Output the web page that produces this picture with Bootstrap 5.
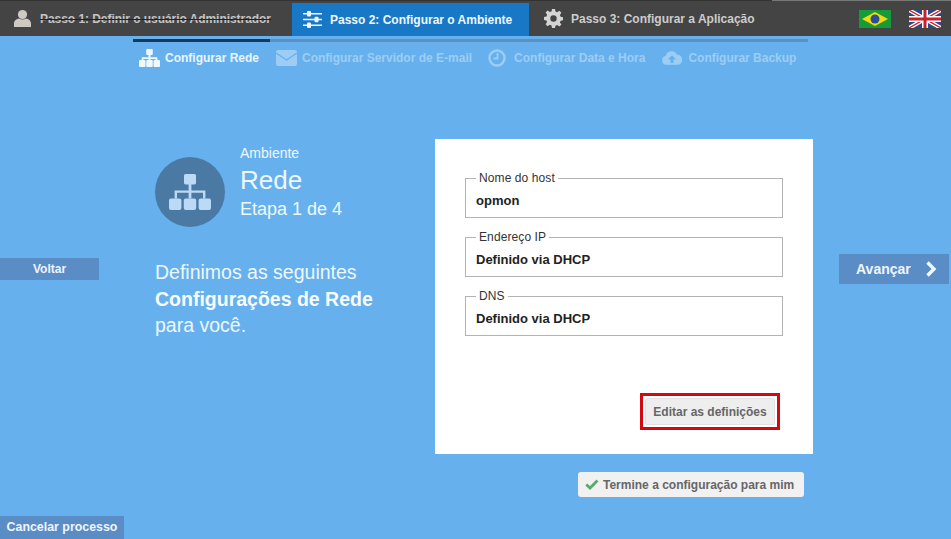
<!DOCTYPE html>
<html lang="pt-BR">
<head>
<meta charset="utf-8">
<title>Configurar Rede</title>
<link href="https://cdn.jsdelivr.net/npm/bootstrap@5.3.0/dist/css/bootstrap.min.css" rel="stylesheet">
<style>
html,body{height:539px;overflow:hidden}
body{background:#66b1ed;font-family:"Liberation Sans",Arial,sans-serif;color:#fff;width:951px}
.page-wrap{height:539px}
.top-rail{height:1px;background:#777}
.top-rail-fill{height:1px;width:772px;background:#333}
.topstrip{height:35px;background:#444}
.step-tab{height:35px;font-size:12px;font-weight:700}
.step-one{width:292px;padding-left:13px;color:#c4c4c4;letter-spacing:-.05px}
.step-one span{text-decoration:line-through;text-decoration-color:#222}
.step-two{width:237px;padding-left:11px;background:#1878c6;color:#eef7ff;margin-top:2px;height:33px}
.step-three{padding-left:15px;color:#ccc;width:330px}
.flag-box{gap:18px;padding-right:10px}
.sub-rail{height:3px;margin:3px 143px 0 133px;background:#5b90c0}
.rail-done{width:137px;background:#153a5c}
.sub-steps{height:32px;margin-left:139px;font-size:12px;font-weight:700;color:#9dcdf4;gap:16px}
.sub-item{gap:5px}
.sub-item.on{color:#e8f5ff}
.sub-mail{margin-left:1px}
.sub-clock{gap:8px}
.sub-cloud{margin-left:1px;gap:6px}
.main-row{height:410px;padding-top:65px}
.prev-col{width:155px}
.side-btn{background:#5a8cc6;color:#eef6ff;font-size:12px;font-weight:700}
.prev-btn{width:99px;height:22px;margin-top:119px}
.intro-col{width:280px}
.intro-head{gap:15px}
.intro-circle{width:70px;height:70px;margin-top:18px;background:#4a7aa4;border-radius:50%}
.intro-kicker{font-size:14px;line-height:15px;margin-top:7px;color:#eef7ff}
.intro-title{font-size:26px;line-height:30px;margin:4px 0 5px;color:#eef7ff;font-weight:400}
.intro-step{font-size:18px;line-height:19px;color:#eef7ff}
.intro-text{font-size:19.5px;line-height:26.5px;margin-top:32px;color:#eef7ff}
.intro-text b{color:#f6fbff}
.form-sheet{width:378px;height:315px;background:#fff;padding:32px 30px 0}
.field-box{border:1px solid #b3b3b3;height:47px;margin:0 0 12px;padding:0 10px;min-width:0;display:block}
.field-box legend{float:none;width:auto;font-size:12px;line-height:14px;margin:0;padding:0 3px;color:#333;font-weight:400;display:block;letter-spacing:.1px}
.field-value{font-size:13px;font-weight:700;color:#222;line-height:16px;margin-top:8px}
.edit-ring{border:3px solid #d20a0f;padding:2px;margin:45px 3px 0 0}
.edit-btn{height:27px;width:130px;background:#eeeeee;border:1px solid #e2e2e2;border-radius:2px;font-size:12px;font-weight:700;color:#666;padding:0}
.next-col{padding-left:26px}
.next-btn{width:110px;height:30px;margin-top:115px;font-size:14px;gap:14px;padding-left:17px}
.finish-row{padding-left:578px;height:25px;margin-top:-12px}
.finish-btn{width:226px;height:25px;background:#f1f1f1;border:0;border-radius:3px;font-size:12px;font-weight:700;color:#666;padding:0 0 0 7px;gap:4px}
.cancel-btn{width:124px;height:23px;margin-top:19px;font-size:12.4px}
</style>
</head>
<body>
<div class="page-wrap d-flex flex-column">
  <div class="top-rail"><div class="top-rail-fill"></div></div>
  <div class="topstrip d-flex">
    <div class="step-tab step-one d-flex align-items-center gap-2">
      <svg width="19" height="19" viewBox="0 0 19 19" fill="#cfc9c4"><circle cx="9.5" cy="5.5" r="4.6"/><path d="M1 18v-3.500C1 11.500 3.500 10 6 9.500c2 1.300 5 1.300 7 0 2.500.5 5 2 5 5V18z"/></svg>
      <span>Passo 1: Definir o usuário Administrador</span>
    </div>
    <div class="step-tab step-two d-flex align-items-center gap-2">
      <svg width="19" height="17" viewBox="0 0 19 17" fill="#eef7ff"><path d="M0 2h19v1.600H0zM0 7.700h19v1.600H0zM0 13.400h19V15H0z"/><rect x="4" y="0" width="4" height="5.500" rx="1"/><rect x="11.500" y="5.700" width="4" height="5.500" rx="1"/><rect x="4" y="11.400" width="4" height="5.500" rx="1"/></svg>
      <span>Passo 2: Configurar o Ambiente</span>
    </div>
    <div class="step-tab step-three d-flex align-items-center gap-2">
      <svg width="19" height="19" viewBox="0 0 19 19"><path fill="#d4d4d4" fill-rule="evenodd" d="M8 0h3l.5 2.600 1.700.7L15.400 1.800l2 2-1.500 2.200.7 1.700 2.400.5v3l-2.400.5-.7 1.700 1.500 2.200-2 2-2.200-1.500-1.700.7L11 19H8l-.5-2.500-1.700-.7-2.200 1.500-2-2 1.500-2.200-.7-1.700L0 11V8l2.400-.5.700-1.700-1.500-2.200 2-2 2.200 1.500 1.700-.7zM9.500 6.300a3.200 3.200 0 1 0 0 6.400 3.200 3.200 0 0 0 0-6.400z"/></svg>
      <span>Passo 3: Configurar a Aplicação</span>
    </div>
    <div class="flag-box d-flex align-items-center ms-auto">
      <svg width="32" height="18" viewBox="0 0 32 18"><rect width="32" height="18" fill="#169b3a"/><path d="M16 2 29 9 16 16 3 9z" fill="#f5d90a"/><circle cx="16" cy="9" r="4.500" fill="#2a4f96"/></svg>
      <svg width="32" height="18" viewBox="0 0 32 18"><rect width="32" height="18" fill="#2b4a86"/><path d="M0 0 32 18M32 0 0 18" stroke="#fff" stroke-width="4"/><path d="M0 0 32 18M32 0 0 18" stroke="#c8202f" stroke-width="1.300"/><path d="M16 0v18M0 9h32" stroke="#fff" stroke-width="6"/><path d="M16 0v18M0 9h32" stroke="#c8202f" stroke-width="3"/></svg>
    </div>
  </div>

  <div class="sub-rail d-flex"><div class="rail-done"></div></div>
  <div class="sub-steps d-flex align-items-center">
    <div class="sub-item on d-flex align-items-center">
      <svg width="21" height="18" viewBox="0 0 21 18" fill="#f0f8ff"><rect x="7.250" y="0" width="6.500" height="6" rx="1"/><path d="M9.500 6h2V8.300H18.300v3.200h-1.800V10h-5v1.500h-2V10h-5v1.500H2.700V8.300h6.800z"/><rect x="0" y="11" width="6.500" height="7" rx="1"/><rect x="7.250" y="11" width="6.500" height="7" rx="1"/><rect x="14.500" y="11" width="6.500" height="7" rx="1"/></svg>
      <span>Configurar Rede</span>
    </div>
    <div class="sub-item sub-mail d-flex align-items-center">
      <svg width="21" height="16" viewBox="0 0 21 16"><rect width="21" height="16" rx="2" fill="#9dcdf4"/><path d="M0 3l10.500 7L21 3" fill="none" stroke="#66b1ed" stroke-width="1.300"/></svg>
      <span>Configurar Servidor de E-mail</span>
    </div>
    <div class="sub-item sub-clock d-flex align-items-center">
      <svg width="18" height="18" viewBox="0 0 18 18"><circle cx="9" cy="9" r="7.500" fill="none" stroke="#9dcdf4" stroke-width="2.400"/><path d="M9.500 4v5.500H5.500" fill="none" stroke="#9dcdf4" stroke-width="1.800"/></svg>
      <span>Configurar Data e Hora</span>
    </div>
    <div class="sub-item sub-cloud d-flex align-items-center">
      <svg width="20" height="16" viewBox="0 0 22 17"><path fill="#9dcdf4" d="M5 16a5 5 0 0 1-.8-9.900A6.500 6.500 0 0 1 16.500 5 5.500 5.500 0 0 1 17 16z"/><path fill="#66b1ed" d="M11 5.500l4.500 4.500h-2.800v4h-3.400v-4H6.500z"/></svg>
      <span>Configurar Backup</span>
    </div>
  </div>

  <div class="main-row d-flex">
    <div class="prev-col">
      <div class="side-btn prev-btn d-flex align-items-center justify-content-center">Voltar</div>
    </div>
    <div class="intro-col">
      <div class="intro-head d-flex">
        <div class="intro-circle d-flex align-items-center justify-content-center flex-shrink-0">
          <svg width="42" height="36" viewBox="0 0 21 18" fill="#bcdaf5"><rect x="7.500" y="0" width="6" height="5.200" rx=".8"/><path d="M9.800 5h1.400v3.200H18.200v4h-1.200V9.400h-5.800v2.800H9.800V9.400H4v2.800H2.800v-4h7z"/><rect x="0" y="12.200" width="6.200" height="5.800" rx="1"/><rect x="7.400" y="12.200" width="6.200" height="5.800" rx="1"/><rect x="14.800" y="12.200" width="6.200" height="5.800" rx="1"/></svg>
        </div>
        <div>
          <div class="intro-kicker">Ambiente</div>
          <div class="intro-title">Rede</div>
          <div class="intro-step">Etapa 1 de 4</div>
        </div>
      </div>
      <div class="intro-text">Definimos as seguintes<br><b>Configurações de Rede</b><br>para você.</div>
    </div>
    <div class="form-sheet d-flex flex-column">
      <fieldset class="field-box"><legend>Nome do host</legend><div class="field-value">opmon</div></fieldset>
      <fieldset class="field-box"><legend>Endereço IP</legend><div class="field-value">Definido via DHCP</div></fieldset>
      <fieldset class="field-box"><legend>DNS</legend><div class="field-value">Definido via DHCP</div></fieldset>
      <div class="d-flex justify-content-end">
        <div class="edit-ring"><button type="button" class="btn edit-btn">Editar as definições</button></div>
      </div>
    </div>
    <div class="next-col">
      <div class="side-btn next-btn d-flex align-items-center">
        <span>Avançar</span>
        <svg width="12" height="16" viewBox="0 0 12 16"><path d="M2.500 1.500 9 8l-6.500 6.500" fill="none" stroke="#f0f8ff" stroke-width="3.400"/></svg>
      </div>
    </div>
  </div>

  <div class="finish-row">
    <button type="button" class="btn finish-btn d-flex align-items-center">
      <svg width="14" height="11" viewBox="0 0 14 11"><path d="M1.300 5.500 5 9l7.500-7.500" fill="none" stroke="#5aaa6a" stroke-width="2.800"/></svg>
      <span>Termine a configuração para mim</span>
    </button>
  </div>
  <div class="side-btn cancel-btn d-flex align-items-center justify-content-center">Cancelar processo</div>
</div>
<script src="https://cdn.jsdelivr.net/npm/bootstrap@5.3.0/dist/js/bootstrap.bundle.min.js"></script>
</body>
</html>
